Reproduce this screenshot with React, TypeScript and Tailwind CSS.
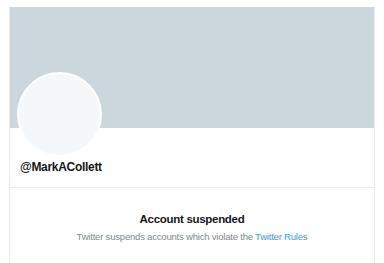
export default function App() {
  return (
    <div className="h-[263px] w-[384px] overflow-hidden bg-white font-['Liberation_Sans',Arial,sans-serif]">
      <div className="mx-[9px] mt-[7px] h-[256px] border-x border-[#e6ecf0]">
        {/* banner */}
        <div className="h-[121px] bg-[#ccd6dd]" />

        {/* avatar + name */}
        <div className="relative px-[10px]">
          <div className="absolute left-[7px] top-[-56px] h-[85px] w-[85px] rounded-full border-2 border-white bg-[#f5f8fa]" />
          <div className="pt-[32px] text-[12px] font-bold leading-[14px] tracking-[-0.3px] text-[#14171a]">@MarkACollett</div>
        </div>

        <div className="mt-[13px] border-t border-[#e6ecf0]" />

        {/* suspended notice */}
        <div className="pt-[24px] text-center">
          <div className="text-[11.5px] font-bold leading-[14px] tracking-[-0.3px] text-[#14171a]">Account suspended</div>
          <p className="mt-[5px] text-[9.5px] leading-[12px] tracking-[-0.2px] text-[#7b8a96]">
            Twitter suspends accounts which violate the{" "}
            <span className="text-[#2d9fe6]">Twitter Rules</span>
          </p>
        </div>
      </div>
    </div>
  );
}
